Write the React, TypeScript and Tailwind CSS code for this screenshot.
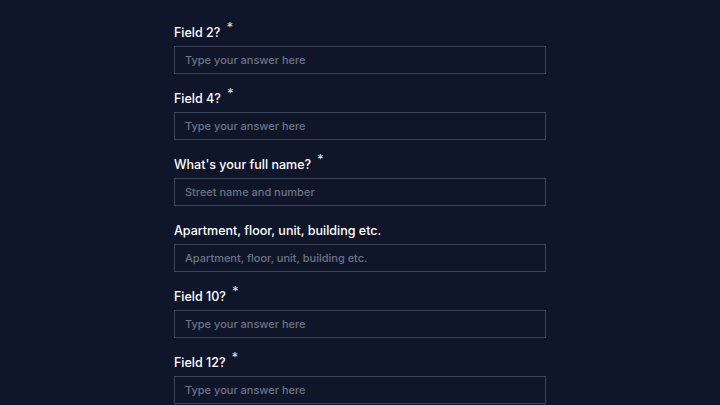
import React from "react";

const fields = [
  { label: "Field 2?", placeholder: "Type your answer here", req: true },
  { label: "Field 4?", placeholder: "Type your answer here", req: true },
  { label: "What's your full name?", placeholder: "Street name and number", req: true },
  { label: "Apartment, floor, unit, building etc.", placeholder: "Apartment, floor, unit, building etc.", req: false },
  { label: "Field 10?", placeholder: "Type your answer here", req: true },
  { label: "Field 12?", placeholder: "Type your answer here", req: true },
];

export default function App() {
  return (
    <div
      className="w-[720px] h-[405px] overflow-hidden bg-[#10162a] flex justify-center"
      style={{ fontFamily: "Inter, 'Noto Sans', sans-serif" }}
    >
      <div className="w-[372px] pt-[23px] flex flex-col">
        {fields.map((f, i) => (
          <div key={i} className="flex flex-col mb-[15px]">
            <div className="h-[21px] flex items-end pb-[1px] text-[12.5px] font-medium text-white leading-[20px]">
              <span>{f.label}</span>
              {f.req && (
                <span className="ml-[6px] text-[13px] text-gray-300 relative -top-[6px]">*</span>
              )}
            </div>
            <input
              className="mt-[2px] h-[28px] w-full bg-transparent border border-[#3b4458] px-[10px] text-[11px] font-medium text-white placeholder:text-[#6b7385] outline-none"
              placeholder={f.placeholder}
            />
          </div>
        ))}
      </div>
    </div>
  );
}
